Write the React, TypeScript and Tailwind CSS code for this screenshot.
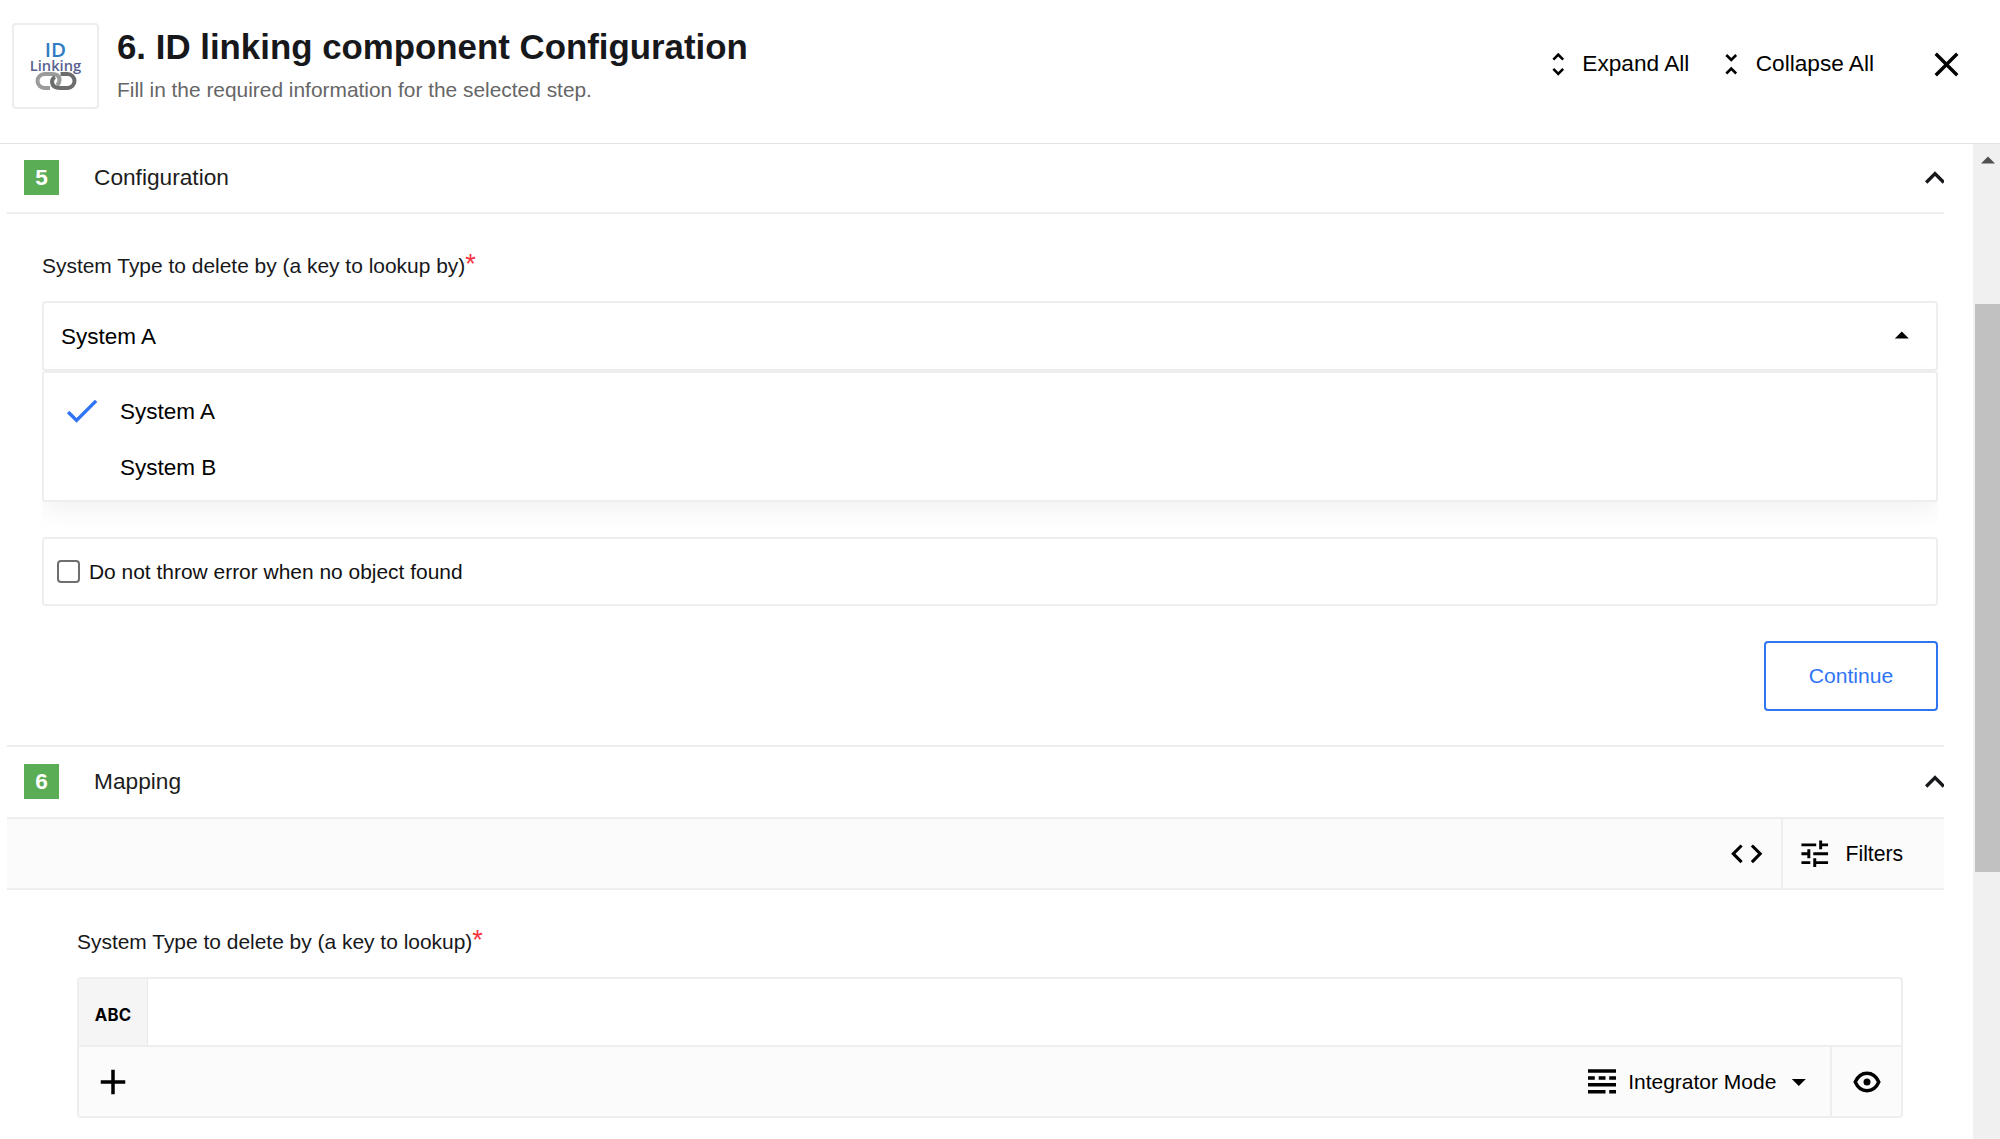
import React from "react";

type IconProps = { d: string; className: string };

function Icon({ d, className }: IconProps) {
  return (
    <svg viewBox="0 0 24 24" fill="currentColor" className={`shrink-0 ${className}`}>
      <path d={d} />
    </svg>
  );
}

const ICONS = {
  unfoldMore:
    "M12 5.83 15.17 9l1.41-1.41L12 3 7.41 7.59 8.83 9 12 5.83zm0 12.34L8.83 15l-1.41 1.41L12 21l4.59-4.59L15.17 15 12 18.17z",
  unfoldLess:
    "M7.41 18.59 8.83 20 12 16.83 15.17 20l1.41-1.41L12 14l-4.59 4.59zm9.18-13.18L15.17 4 12 7.17 8.83 4 7.41 5.41 12 10l4.59-4.59z",
  close:
    "M19 6.41 17.59 5 12 10.59 6.41 5 5 6.41 10.59 12 5 17.59 6.41 19 12 13.41 17.59 19 19 17.59 13.41 12z",
  up: "M7.41 15.41 12 10.83l4.59 4.58L18 14l-6-6-6 6z",
  dropUp: "m7 14 5-5 5 5z",
  dropDown: "m7 10 5 5 5-5z",
  check: "M9 16.17 4.83 12l-1.42 1.41L9 19 21 7l-1.41-1.41z",
  code: "M9.4 16.6 4.8 12l4.6-4.6L8 6l-6 6 6 6 1.4-1.4zm5.2 0 4.6-4.6-4.6-4.6L16 6l6 6-6 6-1.4-1.4z",
  tune: "M3 17v2h6v-2H3zM3 5v2h10V5H3zm10 16v-2h8v-2h-8v-2h-2v6h2zM7 9v2H3v2h4v2h2V9H7zm14 4v-2H11v2h10zm-6-4h2V7h4V5h-4V3h-2v6z",
  add: "M19 13h-6v6h-2v-6H5v-2h6V5h2v6h6v2z",
};

function Logo() {
  return (
    <div className="flex h-[86px] w-[87px] shrink-0 flex-col items-center rounded-[4px] border-2 border-[#ededed] bg-white pt-[14px]">
      <span className="font-['Open_Sans'] text-[20.500px] leading-[20px] font-semibold text-[#2f7cc4]">ID</span>
      <span className="font-['Open_Sans'] text-[14.700px] leading-[12px] font-semibold text-[#58618f]">Linking</span>
      <svg viewBox="0 0 42 20" className="h-[20px] w-[42px]" fill="none" strokeWidth="4">
        <path d="M15 17H9.500a7 7 0 0 1 0-14H17Q24.500 3 24.500 9Q24.500 13 21.500 14" stroke="#9a9b9b" />
        <path d="M20 6Q17 7.500 17 11Q17.500 17 25 17h7.500a7 7 0 0 0 0-14H25.500" stroke="#6c6d6e" />
      </svg>
    </div>
  );
}

function SectionHeader({ number, title }: { number: number; title: string }) {
  return (
    <div className="flex h-full items-center overflow-hidden pb-px pl-[17px]">
      <span className="flex h-[35px] w-[35px] items-center justify-center bg-[#5aac55] text-[22.600px] font-bold text-white">
        {number}
      </span>
      <span className="ml-[35px] text-[22.700px] text-[#1c1d20]">{title}</span>
      <Icon d={ICONS.up} className="mr-[-10.500px] ml-auto h-[40px] w-[40px] text-[#17181b]" />
    </div>
  );
}

function FieldLabel({ children }: { children: React.ReactNode }) {
  return (
    <div className="h-[30px] text-[20.950px] leading-[30px] whitespace-nowrap text-[#17181b]">
      {children}
      <span className="text-[27px] leading-none text-[#f5333f]">*</span>
    </div>
  );
}

function ModeIcon() {
  return (
    <svg viewBox="0 0 28 25" className="h-[25px] w-[28px] shrink-0" fill="currentColor">
      <path d="M0 0.200h28v3.500H0zM0 7.200h6.800v3.500H0zM10.700 7.200h6.800v3.500h-6.800zM21.200 7.200H28v3.500h-6.800zM0 14.100h28v3.500H0zM0 21.100h17.500v3.500H0zM21.200 21.100H28v3.500h-6.800z" />
    </svg>
  );
}

function EyeIcon() {
  return (
    <svg viewBox="0 0 28 22" className="h-[22px] w-[28px]" fill="none">
      <path
        d="M2.200 11C4.700 5.500 9 2.300 14 2.300S23.300 5.500 25.800 11C23.300 16.500 19 19.700 14 19.700S4.700 16.500 2.200 11z"
        stroke="currentColor"
        strokeWidth="3.400"
      />
      <circle cx="14" cy="11" r="3.500" fill="currentColor" />
    </svg>
  );
}

export default function App() {
  return (
    <div className="flex h-[1139px] w-[2000px] flex-col overflow-hidden bg-white font-['Liberation_Sans',Arial,sans-serif] text-black">
      <header className="flex h-[144px] shrink-0 items-start border-b border-[#e4e4e4] pt-[23px] pr-[33px] pl-[12px]">
        <Logo />
        <div className="ml-[18px] flex flex-col gap-[5px] pt-[2px] whitespace-nowrap">
          <h1 className="text-[34.850px] leading-[44px] font-bold text-[#17181b]">
            6. ID linking component Configuration
          </h1>
          <p className="text-[20.900px] leading-[31px] text-[#666]">
            Fill in the required information for the selected step.
          </p>
        </div>
        <div className="ml-auto flex h-[82px] items-center text-[22.640px] whitespace-nowrap">
          <Icon d={ICONS.unfoldMore} className="h-[30.500px] w-[30.500px]" />
          <span className="ml-[9px]">Expand All</span>
          <Icon d={ICONS.unfoldLess} className="ml-[27px] h-[30.500px] w-[30.500px]" />
          <span className="ml-[9px]">Collapse All</span>
          <Icon d={ICONS.close} className="ml-[52px] h-[41px] w-[41px]" />
        </div>
      </header>

      <div className="flex min-h-0 flex-1">
        <main className="w-[1944px] shrink-0 overflow-hidden pl-[7px]">
          <section>
            <div className="h-[70px] border-b-2 border-[#eee]">
              <SectionHeader number={5} title="Configuration" />
            </div>
            <div className="pt-[37px] pr-[6px] pl-[35px]">
              <FieldLabel>System Type to delete by (a key to lookup by)</FieldLabel>
              <div className="mt-[20px] overflow-hidden pb-[35px]">
                <div className="flex h-[70px] items-center justify-between rounded-[4px] border-2 border-[#eee] pr-[17px] pl-[17px] text-[22.500px]">
                  <span className="pt-px">System A</span>
                  <Icon d={ICONS.dropUp} className="h-[33.600px] w-[33.600px]" />
                </div>
                <div className="h-[131px] rounded-[3px] border-2 border-[#eee] bg-white pt-[10px] pl-[17px] text-[22.500px] shadow-[0_10px_24px_rgba(0,0,0,0.05)]">
                  <div className="flex h-[56px] items-center">
                    <Icon d={ICONS.check} className="h-[41.500px] w-[41.500px] text-[#2f74f5]" />
                    <span className="ml-[17.500px] pt-px">System A</span>
                  </div>
                  <div className="flex h-[56px] items-center pt-px pl-[59px]">System B</div>
                </div>
              </div>
              <label className="flex h-[69px] items-center rounded-[4px] border-2 border-[#eee] pl-[13px] text-[20.950px]">
                <input
                  type="checkbox"
                  className="h-[23px] w-[23px] appearance-none rounded-[4px] border-2 border-[#6f6f6f] bg-white"
                />
                <span className="ml-[9px] text-[#111]">Do not throw error when no object found</span>
              </label>
              <div className="mt-[35px] flex justify-end">
                <button className="h-[70px] w-[174px] rounded-[4px] border-2 border-[#2f74f0] text-[21.100px] text-[#2f74f5]">
                  Continue
                </button>
              </div>
            </div>
          </section>

          <section className="mt-[34px]">
            <div className="h-[74px] border-y-2 border-[#eee]">
              <SectionHeader number={6} title="Mapping" />
            </div>
            <div className="flex h-[71px] items-center justify-end border-b-2 border-[#eee] bg-[#fbfbfb]">
              <Icon d={ICONS.code} className="mr-[16px] h-[37.500px] w-[37.500px]" />
              <div className="flex h-full w-[163px] items-center border-l-2 border-[#eee] pl-[14px]">
                <Icon d={ICONS.tune} className="h-[35.500px] w-[35.500px]" />
                <span className="ml-[13px] text-[21.200px]">Filters</span>
              </div>
            </div>
            <div className="pt-[37px] pr-[41px] pl-[70px]">
              <FieldLabel>System Type to delete by (a key to lookup)</FieldLabel>
              <div className="mt-[20px] h-[141px] overflow-hidden rounded-[4px] border-2 border-[#eee]">
                <div className="flex h-[68px] border-b-2 border-[#eee]">
                  <span className="flex w-[69px] items-center justify-center border-r border-[#e9e9e9] bg-[#f5f5f5] pt-[7px] font-['Inter',sans-serif] text-[16.700px] font-bold tracking-[0.300px]">
                    ABC
                  </span>
                </div>
                <div className="flex h-[69px] items-center bg-[#fbfbfb]">
                  <Icon d={ICONS.add} className="ml-[13px] h-[42px] w-[42px]" />
                  <div className="ml-auto flex items-center">
                    <ModeIcon />
                    <span className="ml-[12px] text-[21px]">Integrator Mode</span>
                    <Icon d={ICONS.dropDown} className="mr-[14px] ml-[6px] h-[33.600px] w-[33.600px]" />
                  </div>
                  <div className="flex h-full w-[71px] items-center justify-center border-l-2 border-[#eee]">
                    <EyeIcon />
                  </div>
                </div>
              </div>
            </div>
          </section>
        </main>

        <div className="ml-auto flex w-[27px] flex-col bg-[#f0f0f0] pl-[2px]">
          <div className="flex h-[160px] shrink-0 justify-center pt-[12px]">
            <svg viewBox="0 0 14 8" className="h-[8px] w-[14px]" fill="#505050">
              <path d="M0 7.500 7 0.500l7 7z" />
            </svg>
          </div>
          <div className="h-[568px] bg-[#c1c1c1]" />
        </div>
      </div>
    </div>
  );
}
